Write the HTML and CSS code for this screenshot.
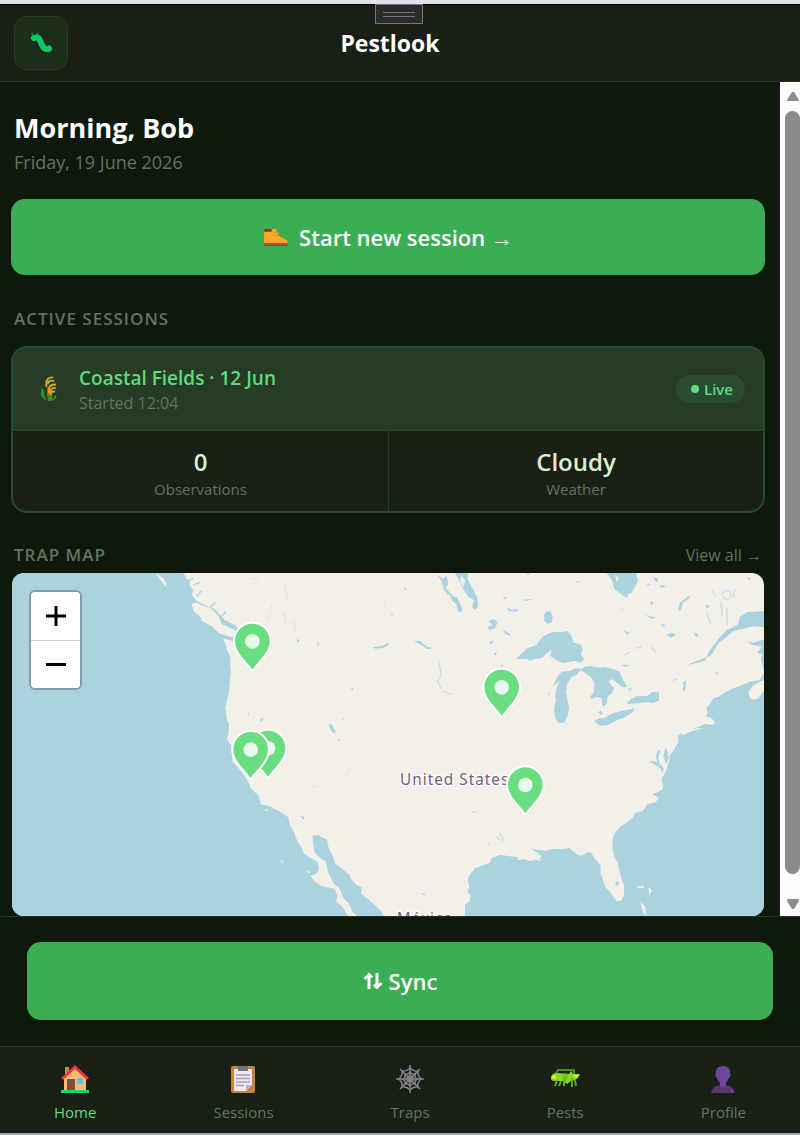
FILE: index.html
```html
<!DOCTYPE html>
<html lang="en">
<head>
<meta charset="utf-8">
<meta name="viewport" content="width=device-width, initial-scale=1">
<title>Pestlook</title>
<link rel="stylesheet" href="styles.css">
</head>
<body>
<div class="app">
  <header class="topbar">
    <button class="logo" type="button" aria-label="Pestlook menu">
      <svg viewBox="0 0 24 24" width="24" height="24"><path d="M5 7Q9.500 5 11 9.500T15 17Q18 19 20 17.500" fill="none" stroke="#0acb63" stroke-width="6" stroke-linecap="round" stroke-linejoin="round"/><path d="M4 4 2.500 2M7.500 4 9 2" stroke="#078c48" stroke-width="1.500"/></svg>
    </button>
    <h1 class="brand">Pestlook</h1>
    <span class="grip" aria-hidden="true"></span>
  </header>

  <div class="viewport">
    <main class="content">
      <section class="greeting">
        <h2 class="hello">Morning, Bob</h2>
        <p class="date">Friday, 19 June 2026</p>
      </section>

      <button class="primary start" type="button">
        <svg viewBox="0 0 26 20" width="25" height="19"><path d="M1 1H14V4L16 5V8L25 13Q26 15 26 17H1Z" fill="#fba928"/><path d="M1 1H9V4H1Z" fill="#754038"/><path d="M13 5H17M13 8H17" stroke="#e38a1c"/><path d="M1 16H26V19H1Z" fill="#99502b"/></svg>
        <span>Start new session →</span>
      </button>

      <h3 class="label">ACTIVE SESSIONS</h3>
      <article class="session">
        <div class="session-head">
          <svg class="crop" viewBox="0 0 20 28" width="18" height="26"><path d="M9 12Q8 20 10 27M13 18 12 27" stroke="#6b8f16" stroke-width="2" fill="none"/><path d="M2 12Q5 15 5 22L8 27Q1 25 1 19ZM18 20Q19 25 14 27L12 26Q16 24 18 20ZM10 20 12 26 9 26Z" fill="#2f9320"/><path d="M14 1Q7 1 7 8V11M15 5Q9 4 9 8M17 9Q10 9 10 14V18M17 13Q12 12 12 17M16 17Q13 16 11 20" stroke="#e0a52c" stroke-width="2" fill="none" stroke-linecap="round"/></svg>
          <div class="session-text">
            <h4 class="session-name">Coastal Fields · 12 Jun</h4>
            <p class="session-time">Started 12:04</p>
          </div>
          <span class="live"><i class="dot"></i>Live</span>
        </div>
        <div class="stats">
          <div class="stat"><strong>0</strong><span>Observations</span></div>
          <div class="stat"><strong>Cloudy</strong><span>Weather</span></div>
        </div>
      </article>

      <div class="map-head">
        <h3 class="label">TRAP MAP</h3>
        <a class="view-all" href="#traps">View all →</a>
      </div>
      <section class="map" aria-label="Trap map">
        <svg class="map-art" viewBox="36 24 2256 1029" preserveAspectRatio="xMinYMin slice">
          <defs>
            <g id="pin"><path d="M0-53A52 52 0 0 1 52 0C52 32 20 57 0 85C-20 57-52 32-52 0A52 52 0 0 1 0-53Z" fill="#6bdd81" stroke="#fff" stroke-width="12" stroke-linejoin="round" paint-order="stroke"/><circle r="22" fill="#e6f9ea"/></g>
          </defs>
          <g fill="#aad3df">
            <path d="M36 24H550L560 42 570 48 568 62 580 75 576 90 588 106 612 120 640 130 655 145 675 165 705 180 720 195 712 230 690 226 670 220 680 250 690 275 692 320 688 370 684 395 676 428 680 460 687 480 684 515 680 522 694 542 698 590 725 620 745 650 752 668 778 695 782 718 810 724 840 740 865 757 871 783 884 805 893 832 904 845 912 867 935 880 953 892 957 915 948 927 932 932 942 948 965 964 1004 971 1012 990 1009 1010 1028 1026 1045 1053H36Z"/>
            <path d="M937 812 955 810 965 816 981 824 986 850 1000 875 1004 894 1028 912 1048 930 1055 945 1070 960 1085 967 1083 986 1105 1003 1120 1016 1140 1035 1152 1053H1072L1058 1042 1045 1012 1030 1000 1020 972 1000 955 990 932 983 918 978 890 960 878 944 862 940 840Z"/>
            <path d="M985 477 995 479 1007 500 1005 507 993 497ZM1118 247 1150 242 1162 233 1167 240 1150 248 1125 251ZM903 750 913 758 911 764 904 757ZM780 462 790 458 787 468 782 470ZM952 230 958 236 954 244ZM1170 145 1180 147 1176 152ZM1027 458 1032 462 1028 466ZM890 222 899 226 893 234ZM1051 370 1060 369 1059 375ZM1012 522 1020 522 1015 530ZM742 442 747 446 745 452Z"/>
          </g>
          <path d="M855 65 862 105 M815 120 806 165 M880 165 887 205 M1150 100 1155 122 M1050 615 1032 637 M936 665 952 664 M850 140 858 178 M755 40 778 43 M820 105 828 112" fill="none" stroke="#dde3df" stroke-width="3"/>
          <path d="M574 116 590 113 608 122 632 128 655 152 666 178 705 195 708 209 695 217 660 206 635 184 606 168 600 153 582 140ZM466 24 480 32 492 42 502 66 488 55 480 42ZM694 262 700 268 692 270ZM690 298 706 302 694 305ZM792 732 806 734 800 739ZM838 885 848 889 850 896ZM920 914 932 922 925 924Z" fill="#f3f0e9"/>
          <path d="M590 95 604 78M580 60 600 52M630 128 646 112M665 155 677 140M560 48 580 40" fill="none" stroke="#aad3df" stroke-width="4"/>
          <g transform="translate(1200)" fill="#aad3df">
            <path d="M1092 325 1078 345 1050 350 1020 362 995 372 975 382 955 396 940 400 932 415 920 428 923 442 918 455 935 460 945 472 938 480 915 476 895 486 848 500 834 513 835 530 825 550 812 567 807 590 795 625 785 640 789 672 775 681 757 687 777 699 767 711 742 718 728 738 706 743 698 759 677 775 660 785 642 808 637 828 637 848 645 880 653 893 662 935 672 960 672 990 665 1005 652 1010 640 997 632 981 616 967 607 940 602 928 601 899 585 882 572 861 560 863 545 872 530 868 508 849 485 853 460 851 438 857 415 854 395 853 412 863 425 874 419 882 428 888 405 884 391 888 370 883 352 885 352 876 330 874 300 870 275 879 270 893 225 910 207 932 203 945 208 965 202 980 212 992 209 1008 196 1018 194 1053H1092Z"/>
            <path d="M348 283 365 265 382 250 410 240 425 217 448 205 465 200 487 202 502 198 515 214 520 233 542 238 548 253 543 267 553 283 541 293 525 287 505 291 486 294 467 284 450 272 456 255 438 266 427 279 406 281 390 287 380 281Z"/>
            <path d="M460 363 471 337 485 320 510 318 524 310 545 311 555 305 571 303 595 308 615 307 643 313 660 320 665 337 682 365 668 367 647 350 633 342 626 350 642 370 634 386 623 393 621 415 611 425 606 418 604 399 590 395 577 401 569 396 580 385 584 356 573 336 556 324 541 316 529 330 514 337 502 356 498 380 502 402 507 430 503 452 493 473 475 473 465 458 462 430 468 405 466 390 470 366 480 348Z"/>
            <path d="M582 468 600 460 615 458 640 444 665 438 705 430 697 442 675 457 650 466 625 480 600 482 590 475ZM681 413 693 402 712 392 742 393 757 381 777 382 778 406 758 414 740 411 715 415 685 418ZM595 442 602 436 609 445 602 451ZM684 369 696 371 688 377Z"/>
            <path d="M165 24H204L203 43 217 70 232 98 234 124 225 134 216 127 222 105 206 97 193 78 180 52ZM108 28 130 42 140 32 145 55 138 70 160 94 172 98 188 134 182 143 173 137 169 118 157 107 152 93 131 76 124 45ZM620 24H708L714 50 704 67 695 83 684 87 681 99 668 91 643 72 635 44ZM432 148 439 140 452 139 458 155 455 173 442 176 433 168Z"/>
            <path d="M918 277 930 255 955 222 980 196 1013 180 1020 155 1040 142 1092 138V187L1060 184 1035 190 1000 198 975 220 955 235 940 260 932 272ZM1039 229 1060 233 1092 223V320L1083 282 1086 268 1072 263 1085 245 1056 239ZM834 135 841 112 866 93 870 98 850 112 842 136ZM860 301 880 292 920 277 915 287 890 293ZM850 350 859 346 855 380 849 376ZM775 553 781 562 774 578 780 597 790 608 789 627 781 610 747 588 772 591 767 573ZM795 550 805 562 802 578 812 566 798 598 790 575Z"/>
            <path d="M42 228 60 227 80 245 103 250 80 252 65 240ZM265 168 282 162 292 172 285 190 268 196 262 186 278 180ZM308 194 330 206 332 213 316 206ZM264 234 282 226 275 237ZM282 265 292 260 286 272ZM302 299 312 301 304 306ZM322 128 335 135 355 132 349 140 326 138ZM370 104 397 101 381 108ZM308 96 322 98 313 103ZM670 195 690 205 681 209ZM800 209 815 203 829 210 812 219ZM880 202 897 210 888 216ZM750 108 762 113 754 120ZM662 299 690 300 676 305ZM735 150 770 158 754 161ZM780 175 798 181 790 185ZM760 38 775 40 770 53ZM1040 38 1053 40 1048 45ZM12 68 21 70 16 76ZM645 955 651 947 657 958 650 963ZM378 24 391 26 384 30ZM445 383 450 381 447 392ZM60 986 78 986 74 991ZM604 930 608 932 606 936ZM529 49 538 50 533 54ZM948 320 954 322 951 332ZM918 116 930 125 920 130ZM776 60 800 63 785 68Z"/>
            <g fill="none" stroke="#c6dfe2" stroke-width="4"><path d="M115 288 124 330 112 350 126 372M128 378 154 388M672 270 690 262M710 250 725 245M752 246 768 262M963 110 967 155M980 130 982 180M920 145 932 174M818 347 830 341M290 815 300 825M300 806 312 829M262 840 270 836M215 741 230 742M935 75 945 92M1000 100 1004 72M665 130 668 140M740 60 752 58M125 52 144 90"/><circle cx="980" cy="90" r="13"/></g>
            <path d="M1092 345 1078 350 1058 363 1045 382 1050 398 1062 405 1076 399 1092 377ZM845 497 875 491 912 488 880 497 846 511ZM710 964 732 963 730 970 715 970ZM745 967 756 975 748 992ZM721 1012 735 1023 740 1053 730 1044ZM185 33 196 46 190 68 180 45ZM645 30 657 40 650 50Z" fill="#f3f0e9"/>
          </g>
          <g class="place"><text x="1200" y="660">United States</text><text x="1190" y="1076">México</text></g>
          <use href="#pin" x="757" y="229"/><use href="#pin" x="804" y="550"/><use href="#pin" x="752" y="554"/><use href="#pin" x="1505" y="367"/><use href="#pin" x="1576" y="660"/>
        </svg>
        <div class="zoom">
          <button type="button" aria-label="Zoom in"><svg viewBox="0 0 20 20" width="20" height="20"><path d="M0 10H20M10 0V20" stroke="#000" stroke-width="3"/></svg></button>
          <button type="button" aria-label="Zoom out"><svg viewBox="0 0 20 20" width="20" height="20"><path d="M0 9.500H20" stroke="#000" stroke-width="3"/></svg></button>
        </div>
      </section>
    </main>
    <div class="scrollbar" aria-hidden="true">
      <svg viewBox="0 0 14 10" width="14" height="10"><path d="M6 1H8L13 9Q13 10 12 10H2Q1 10 1 9Z" fill="#8b8b8b"/></svg>
      <span class="thumb"></span>
      <svg viewBox="0 0 14 10" width="14" height="10"><path d="M6 10H8L13 2Q13 0 12 0H2Q1 0 1 2Z" fill="#8b8b8b"/></svg>
    </div>
  </div>

  <div class="syncbar">
    <button class="primary sync" type="button">
      <svg viewBox="0 0 20 18" width="20" height="18"><path d="M6 17V3M1.500 7 6 2.500 9 5.500M14 1V15M11 12.500 14 15.500 18.500 11" fill="none" stroke="#fff" stroke-width="3"/></svg>
      <span>Sync</span>
    </button>
  </div>

  <nav class="tabs">
    <a class="tab active" href="#home">
      <svg viewBox="0 0 28 28" width="28" height="28"><path d="M4 2H8V10H4Z" fill="#c78c50"/><path d="M3 13 14 2 25 13V26H3Z" fill="#f6bd70"/><path d="M1 14 14 2 27 14" fill="none" stroke="#ef3340" stroke-width="3"/><path d="M6 14H14V25H6Z" fill="#874b3b"/><path d="M16 13H22V19H16Z" fill="#66bdf2"/><path d="M0 25H28V28H0Z" fill="#16d477"/></svg>
      <span>Home</span></a>
    <a class="tab" href="#sessions">
      <svg viewBox="0 0 28 28" width="28" height="28"><rect x="2" y="1" width="24" height="27" rx="2" fill="#c98236"/><path d="M5 4H23V20L17 26H5Z" fill="#f0e9f4"/><path d="M17 26V20H23Z" fill="#bcb0c7"/><path d="M9 1H19V6H9Z" fill="#74747e"/><path d="M7 10H21M7 13.500H21M7 17H21M7 20.500H15" stroke="#a9a1b7" stroke-width="1.500"/></svg>
      <span>Sessions</span></a>
    <a class="tab" href="#traps">
      <svg viewBox="0 0 28 28" width="28" height="28" fill="none" stroke="#858088" stroke-width="1.500"><path d="M14 0V28M0 14H28M4 4 24 24M24 4 4 24"/><path d="M14 3Q18 7 22 6Q21 10 25 14Q21 18 22 22Q18 21 14 25Q10 21 6 22Q7 18 3 14Q7 10 6 6Q10 7 14 3ZM14 7Q16 10 19 9Q18 12 21 14Q18 16 19 19Q16 18 14 21Q12 18 9 19Q10 16 7 14Q10 12 9 9Q12 10 14 7Z"/><circle cx="14" cy="14" r="3"/></svg>
      <span>Traps</span></a>
    <a class="tab" href="#pests">
      <svg viewBox="0 0 30 28" width="30" height="28"><path d="M24 10V5H8L5 10" fill="none" stroke="#4b8d20" stroke-width="2"/><path d="M1 12Q2 8 7 8L19 9 21 6 23 9H30L28 13Q25 16 21 16L17 19 13 16H5Q0 16 1 12Z" fill="#87d921"/><path d="M7 15 5 21M11 16 9 21M14 16V21M22 13V22M25 15 26 21" fill="none" stroke="#5dab20" stroke-width="2"/><path d="M15 8Q21 10 15 17Q10 12 15 8Z" fill="#5bc81d"/><circle cx="4" cy="12" r="2" fill="#e5e838"/><path d="M24 10H28V12H24Z" fill="#d5e936"/></svg>
      <span>Pests</span></a>
    <a class="tab" href="#profile">
      <svg viewBox="0 0 28 28" width="28" height="28"><path d="M2 28Q3 21 12 20H16Q25 21 26 28Z" fill="#5b3772"/><path d="M14 1Q22 1 21 9Q23 10 20 13Q18 17 17 18V21L14 23 11 21V18Q8 15 8 13Q5 10 7 9Q6 1 14 1Z" fill="#70459a"/><path d="M22 24 24 28H22Z" fill="#8550b1"/></svg>
      <span>Profile</span></a>
  </nav>
</div>
</body>
</html>
```
FILE: styles.css
```css
* { box-sizing: border-box; }

body {
  margin: 0;
  background: #dfe1e3;
  color: #fff;
  font-family: "Open Sans", "Noto Sans", sans-serif;
}

h1, h2, h3, h4, p { margin: 0; font-weight: 600; }
button { font: inherit; color: inherit; border: 0; padding: 0; cursor: pointer; }
a { color: inherit; text-decoration: none; }
svg { display: block; flex: none; }

.app {
  display: flex;
  flex-direction: column;
  height: 100vh;
  border-top: 4px solid #e2e3e8;
  border-bottom: 2px solid #a0a5a4;
  background: #0e180b;
}

.topbar {
  position: relative;
  display: grid;
  grid-template-columns: 54px 1fr 54px;
  align-items: center;
  padding: 11px 34px 11px 14px;
  border-top: 1px solid #000;
  border-bottom: 1px solid #263522;
  background: #192016;
}
.logo {
  display: grid;
  place-items: center;
  height: 54px;
  border: 1px solid #293a25;
  border-radius: 12px;
  background: #1d2d1a;
}
.brand { text-align: center; font-size: 23px; font-weight: 700; line-height: 32px; }
.grip {
  position: absolute;
  top: -1px;
  left: calc(50% - 25px);
  width: 48px;
  height: 20px;
  border: 1px solid #777;
  background: linear-gradient(#777, #777) center 7px / 32px 1px no-repeat,
    linear-gradient(#777, #777) center 11px / 32px 1px no-repeat, #2b2b2b;
}

.viewport { flex: 1; min-height: 0; display: flex; }
.content {
  flex: 1;
  min-width: 0;
  display: flex;
  flex-direction: column;
  padding: 28px 15px 0 11px;
}
.greeting { padding: 0 3px; margin-bottom: 21px; }
.hello { font-size: 27px; font-weight: 700; line-height: 36px; }
.date { color: #62755b; font-size: 18px; font-weight: 400; line-height: 32px; }

.primary {
  display: flex;
  align-items: center;
  justify-content: center;
  width: 100%;
  border-radius: 14px;
  background: #3bad55;
  color: #fff;
  font-size: 22px;
  font-weight: 600;
  line-height: 32px;
}
.start { gap: 11px; padding: 22px 0; }
.label {
  padding: 0 3px;
  color: #62755b;
  font-size: 17px;
  letter-spacing: 1px;
  line-height: 24px;
}
.start + .label { margin: 32px 0 15px; }

.session {
  border: 2px solid #274c2d;
  border-radius: 16px;
  overflow: hidden;
  background: #192016;
}
.session-head {
  display: flex;
  align-items: center;
  padding: 16px 18px;
  border-bottom: 1px solid #274c2d;
  background: #263c25;
}
.crop { margin-left: 9px; }
.session-text { flex: 1; padding-left: 21px; }
.session-name { color: #60db7d; font-size: 19px; line-height: 28px; }
.session-time { color: #62755b; font-size: 16px; font-weight: 400; line-height: 22px; }
.live {
  display: flex;
  align-items: center;
  gap: 5px;
  padding: 2px 12px 2px 15px;
  border-radius: 14px;
  background: #294b2f;
  color: #60db7d;
  font-size: 15px;
  font-weight: 600;
  line-height: 24px;
}
.dot { width: 8px; height: 8px; border-radius: 50%; background: #60db7d; }
.stats { display: grid; grid-template-columns: 1fr 1fr; }
.stat { display: grid; justify-items: center; padding: 15px 0 11px; }
.stat + .stat { border-left: 1px solid #2a3d27; }
.stat strong { color: #d8efd2; font-size: 24px; font-weight: 600; line-height: 32px; }
.stat span { color: #62755b; font-size: 15px; line-height: 22px; }

.map-head {
  display: flex;
  justify-content: space-between;
  align-items: center;
  margin-top: 30px;
  padding-bottom: 6px;
}
.view-all { padding-right: 3px; color: #62755b; font-size: 16px; line-height: 24px; }
.map {
  position: relative;
  flex: 1;
  min-height: 0;
  margin: 0 1px;
  border-radius: 12px;
  overflow: hidden;
  background: #f3f0e9;
}
.map-art { width: 100%; height: 100%; }
.place {
  fill: #725f77;
  stroke: #fff;
  stroke-width: 6px;
  paint-order: stroke;
  font-family: "Noto Sans", sans-serif;
  font-size: 46px;
  letter-spacing: 3px;
}
.zoom {
  position: absolute;
  top: 17px;
  left: 17px;
  width: 53px;
  border: 2px solid #829ea7;
  border-radius: 6px;
  overflow: hidden;
}
.zoom button {
  display: grid;
  place-items: center;
  width: 100%;
  height: 48px;
  background: #fff;
}
.zoom button + button { border-top: 1px solid #ccc; }

.scrollbar {
  display: flex;
  flex-direction: column;
  align-items: center;
  width: 20px;
  padding: 9px 0 7px 5px;
  background: #fcfcfc;
}
.thumb { flex: 1; width: 100%; margin: 10px 0 25px; border-radius: 8px; background: #8b8b8b; }

.syncbar { padding: 25px 27px 26px; border-top: 1px solid #263522; }
.sync { gap: 6px; padding: 23px 0; }

.tabs {
  display: flex;
  justify-content: space-between;
  padding: 18px 54px 10px;
  border-top: 1px solid #2a3827;
  background: #192016;
}
.tab {
  display: flex;
  flex-direction: column;
  align-items: center;
  gap: 8px;
  color: #62755b;
  font-size: 15px;
  line-height: 22px;
}
.active { color: #60db7d; }
```
